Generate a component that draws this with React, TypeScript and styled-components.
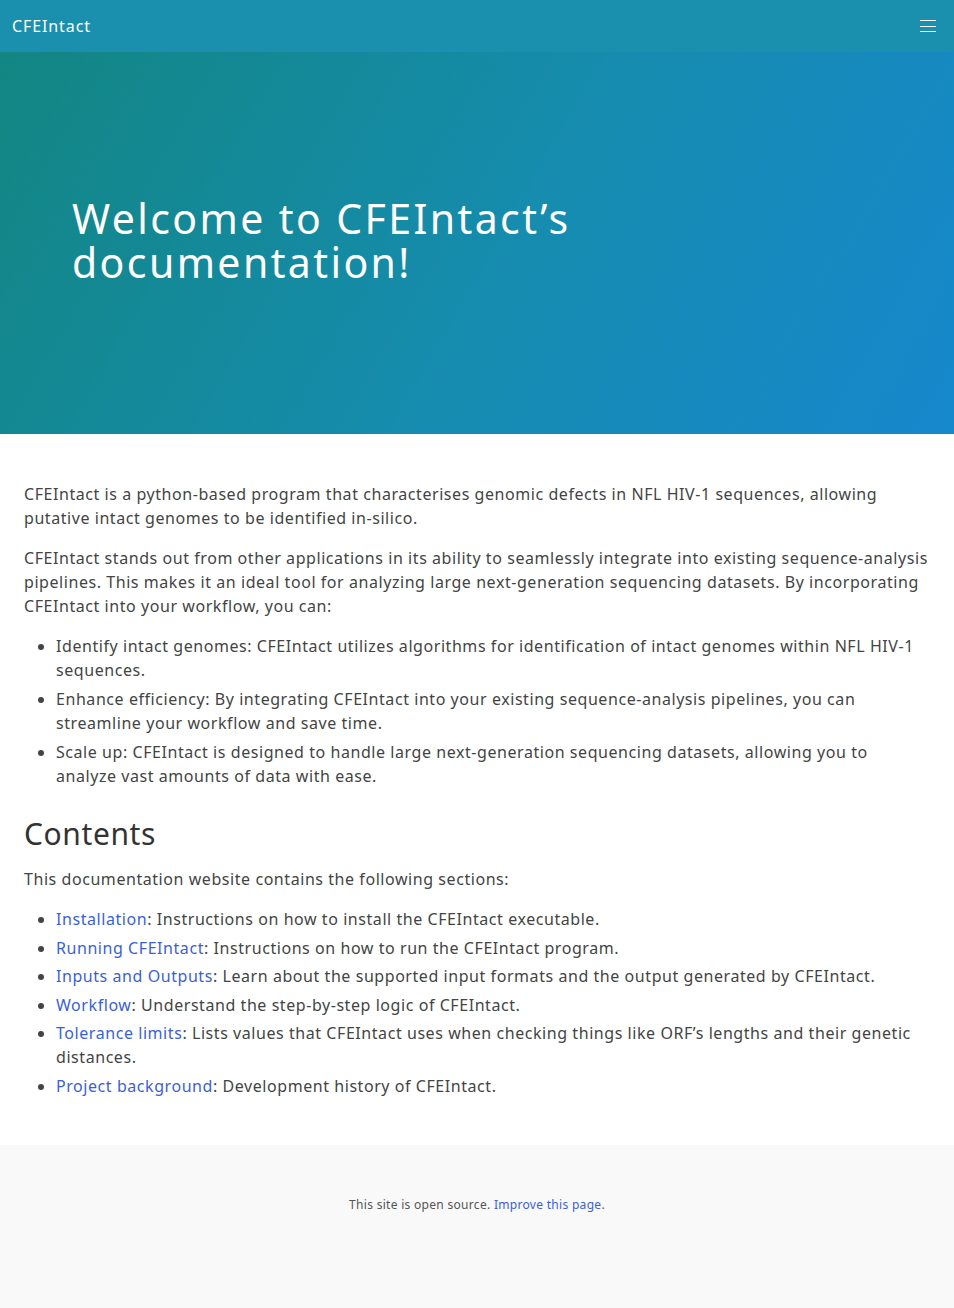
import React from "react";
import styled, { createGlobalStyle } from "styled-components";

const Global = createGlobalStyle`
  html, body { margin: 0; padding: 0; background: #fff; }
  body {
    font-family: "Noto Sans", "Open Sans", sans-serif;
    color: #444;
  }
  * { box-sizing: border-box; }
`;

const NavBar = styled.header`
  height: 52px;
  background: #1a8fae;
  display: flex;
  align-items: center;
  justify-content: space-between;
  padding: 0 18px 0 12px;
`;

const Brand = styled.a`
  color: #fff;
  font-size: 16px;
  letter-spacing: 0.9px;
  text-decoration: none;
`;

const Burger = styled.button`
  background: none;
  border: 0;
  padding: 0;
  width: 16px;
  height: 12px;
  display: flex;
  flex-direction: column;
  justify-content: space-between;
  span {
    display: block;
    height: 1px;
    background: #fff;
  }
`;

const Hero = styled.section`
  height: 382px;
  background: linear-gradient(120deg, #128682 0%, #168cb0 55%, #1688cd 100%);
  display: flex;
  align-items: center;
  padding: 0 72px;
`;

const HeroTitle = styled.h1`
  margin: 0 0 6px;
  color: #fff;
  font-weight: 400;
  font-size: 41px;
  line-height: 44px;
  letter-spacing: 2.4px;
  max-width: 560px;
`;

const Main = styled.main`
  padding: 48px 24px 31px;
  font-size: 16px;
  line-height: 24px;
  letter-spacing: 0.56px;
`;

const P = styled.p`
  margin: 0 0 16px;
`;

const List = styled.ul`
  margin: 0 0 16px;
  padding-left: 32px;
`;

const Item = styled.li<{ $gap?: number }>`
  margin-bottom: ${(p) => p.$gap ?? 5}px;
`;

const H2 = styled.h2`
  font-size: 30px;
  font-weight: 400;
  line-height: 36px;
  letter-spacing: 0.6px;
  color: #333;
  margin: 28px 0 15px;
`;

const Link = styled.a`
  color: #3a5fdb;
  text-decoration: none;
`;

const Footer = styled.footer`
  background: #f9f9f9;
  height: 163px;
  display: flex;
  justify-content: center;
  padding-top: 51px;
  font-size: 12px;
  letter-spacing: 0.3px;
  color: #555;
`;

export default function App() {
  return (
    <>
      <Global />
      <NavBar>
        <Brand href="#">CFEIntact</Brand>
        <Burger aria-label="menu">
          <span />
          <span />
          <span />
        </Burger>
      </NavBar>
      <Hero>
        <HeroTitle>Welcome to CFEIntact’s documentation!</HeroTitle>
      </Hero>
      <Main>
        <P>
          CFEIntact is a python-based program that characterises genomic defects in NFL HIV-1 sequences, allowing
          putative intact genomes to be identified in-silico.
        </P>
        <P>
          CFEIntact stands out from other applications in its ability to seamlessly integrate into existing
          sequence-analysis pipelines. This makes it an ideal tool for analyzing large next-generation sequencing
          datasets. By incorporating CFEIntact into your workflow, you can:
        </P>
        <List>
          <Item>
            Identify intact genomes: CFEIntact utilizes algorithms for identification of intact genomes within NFL
            HIV-1 sequences.
          </Item>
          <Item>
            Enhance efficiency: By integrating CFEIntact into your existing sequence-analysis pipelines, you can
            streamline your workflow and save time.
          </Item>
          <Item>
            Scale up: CFEIntact is designed to handle large next-generation sequencing datasets, allowing you to
            analyze vast amounts of data with ease.
          </Item>
        </List>
        <H2>Contents</H2>
        <P>This documentation website contains the following sections:</P>
        <List>
          <Item $gap={4.5}>
            <Link href="#">Installation</Link>: Instructions on how to install the CFEIntact executable.
          </Item>
          <Item $gap={4.5}>
            <Link href="#">Running CFEIntact</Link>: Instructions on how to run the CFEIntact program.
          </Item>
          <Item $gap={4.5}>
            <Link href="#">Inputs and Outputs</Link>: Learn about the supported input formats and the output
            generated by CFEIntact.
          </Item>
          <Item $gap={4.5}>
            <Link href="#">Workflow</Link>: Understand the step-by-step logic of CFEIntact.
          </Item>
          <Item $gap={4.5}>
            <Link href="#">Tolerance limits</Link>: Lists values that CFEIntact uses when checking things like ORF’s
            lengths and their genetic distances.
          </Item>
          <Item $gap={4.5}>
            <Link href="#">Project background</Link>: Development history of CFEIntact.
          </Item>
        </List>
      </Main>
      <Footer>
        <span>
          This site is open source. <Link href="#">Improve this page</Link>.
        </span>
      </Footer>
    </>
  );
}
